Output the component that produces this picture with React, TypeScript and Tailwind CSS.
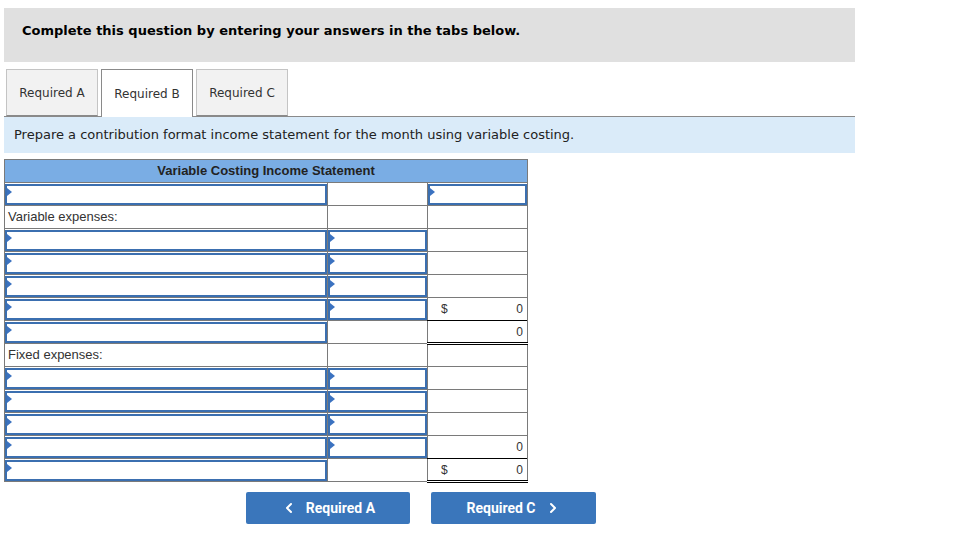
import { ChevronLeft, ChevronRight } from "lucide-react";

const verdana = { fontFamily: '"DejaVu Sans", Verdana, sans-serif' };
const arial = { fontFamily: '"Liberation Sans", Arial, sans-serif' };

function Field() {
  return (
    <div className="relative h-[21px] w-full border-2 border-[#3b6fb0] bg-white">
      <span className="absolute left-0 top-0.5 h-0 w-0 border-y-[4px] border-l-[5px] border-y-transparent border-l-[#3b72c0]" />
    </div>
  );
}

type Row = {
  label?: string;
  a?: boolean;
  b?: boolean;
  c?: boolean;
  dollar?: boolean;
  value?: string;
  cClass?: string;
  bClass?: string;
};

const rows: Row[] = [
  { a: true, c: true },
  { label: "Variable expenses:" },
  { a: true, b: true },
  { a: true, b: true },
  { a: true, b: true },
  { a: true, b: true, dollar: true, value: "0" },
  { a: true, value: "0", cClass: "border-t border-t-black border-b-[3px] border-b-black border-double", bClass: "border-t border-t-black" },
  { label: "Fixed expenses:" },
  { a: true, b: true },
  { a: true, b: true },
  { a: true, b: true },
  { a: true, b: true, value: "0" },
  { a: true, dollar: true, value: "0", cClass: "border-t border-t-black border-b-[3px] border-b-black border-double", bClass: "border-t border-t-black" },
];

const cell = "h-[23px] p-0 border border-[#7a7a7a] leading-[16px]";

export default function App() {
  return (
    <div className="min-h-[552px] bg-white pt-2 pl-1 text-[#222]">
      <div className="w-[851px]">
        <div className="h-[54px] bg-[#e0e0e0] pl-[18px] pt-[15px]">
          <p className="text-[13px] font-bold leading-[16px] text-black" style={verdana}>
            Complete this question by entering your answers in the tabs below.
          </p>
        </div>

        <div className="mt-[7px] flex gap-[3px] border-b border-[#8a8a8a] pl-[2px]" style={verdana}>
          <div className="-mb-px flex h-[47px] w-[92px] items-center justify-center border border-b-[#8a8a8a] border-[#c4c4c4] bg-[#f2f2f2] pt-px text-[12px] text-[#333]">
            Required A
          </div>
          <div className="-mb-px flex h-[48px] w-[92px] items-center justify-center border border-b-0 border-[#8a8a8a] bg-white text-[12px] text-[#333]">
            Required B
          </div>
          <div className="-mb-px flex h-[47px] w-[92px] items-center justify-center border border-b-[#8a8a8a] border-[#c4c4c4] bg-[#f2f2f2] pt-px text-[12px] text-[#333]">
            Required C
          </div>
        </div>

        <div className="flex h-[36px] items-center bg-[#daebf9] pl-[10px]" style={verdana}>
          <p className="text-[13px] text-[#222]">
            Prepare a contribution format income statement for the month using variable costing.
          </p>
        </div>
      </div>

      <table className="mt-[6px] w-[524px] table-fixed border-collapse" style={arial}>
        <colgroup>
          <col className="w-[323px]" />
          <col className="w-[100px]" />
          <col className="w-[100px]" />
        </colgroup>
        <thead>
          <tr>
            <th colSpan={3} className="h-[23px] border border-[#7a7a7a] bg-[#7aade4] p-0 text-center text-[13px] font-bold leading-[16px] text-[#222]">
              Variable Costing Income Statement
            </th>
          </tr>
        </thead>
        <tbody>
          {rows.map((r, i) => (
            <tr key={i}>
              <td className={cell}>
                {r.a ? (
                  <Field />
                ) : (
                  <div className="-mt-px pl-[3px] text-[13px] text-[#333]">{r.label}</div>
                )}
              </td>
              <td className={`${cell} ${r.bClass ?? ""}`}>{r.b ? <Field /> : null}</td>
              <td className={`${cell} ${r.cClass ?? ""}`}>
                {r.c ? (
                  <Field />
                ) : r.value ? (
                  <div className="flex items-center justify-between pl-[13px] pr-[4px] text-[12px] text-[#333]">
                    <span>{r.dollar ? "$" : ""}</span>
                    <span>{r.value}</span>
                  </div>
                ) : null}
              </td>
            </tr>
          ))}
        </tbody>
      </table>

      <div className="mt-[10px] flex gap-[21px] pl-[242px]" style={{ fontFamily: "Roboto, sans-serif" }}>
        <button className="-mt-px flex h-[32px] w-[164px] items-center justify-center gap-[9px] rounded-[2px] bg-[#3a76bb] text-[14px] font-bold text-white">
          <ChevronLeft size={16} strokeWidth={3} />
          Required A
        </button>
        <button className="-mt-px flex h-[32px] w-[165px] items-center justify-center gap-[9px] rounded-[2px] bg-[#3a76bb] text-[14px] font-bold text-white">
          Required C
          <ChevronRight size={16} strokeWidth={3} />
        </button>
      </div>
    </div>
  );
}
